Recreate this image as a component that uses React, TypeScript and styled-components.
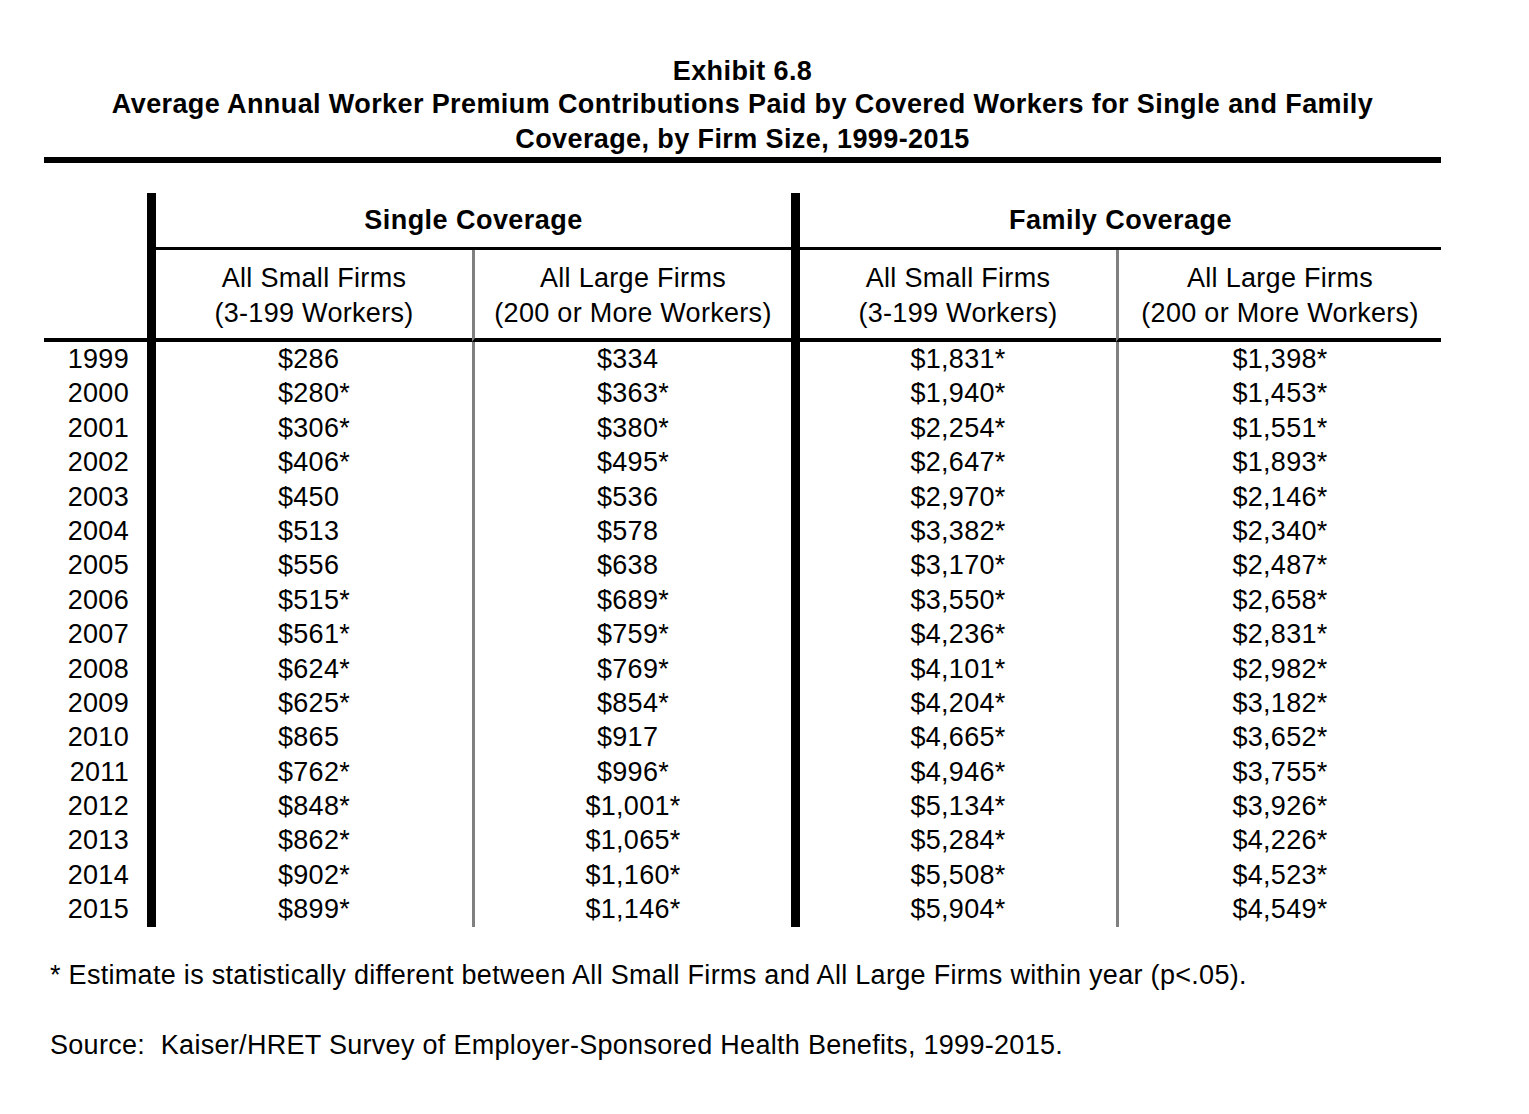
import React from "react";
import styled, { createGlobalStyle } from "styled-components";

const GlobalStyle = createGlobalStyle`
  body {
    margin: 0;
    background: #ffffff;
    color: #000000;
    font-family: "Liberation Sans", Arial, sans-serif;
  }
`;

const Page = styled.div`
  width: 1397px;
  padding: 56px 0 40px 44px;
  letter-spacing: 0.3px;
`;

const ExhibitLine = styled.div`
  font-size: 27px;
  font-weight: bold;
  line-height: 31px;
  letter-spacing: 0.4px;
  text-align: center;
`;

const Subtitle = styled.div`
  font-size: 27px;
  font-weight: bold;
  line-height: 35px;
  letter-spacing: 0.4px;
  text-align: center;
`;

const Rule = styled.div`
  height: 6px;
  background: #000;
  margin-bottom: 30px;
`;

const Grid = styled.div`
  display: grid;
  grid-template-columns: 103px 325px 319px 325px 325px;
  font-size: 27px;
`;

const GroupCell = styled.div<{ $col: string }>`
  grid-column: ${(p) => p.$col};
  box-sizing: border-box;
  height: 57px;
  border-left: 9px solid #000;
  border-bottom: 3px solid #000;
  display: flex;
  align-items: center;
  justify-content: center;
  font-weight: bold;
  letter-spacing: 0.45px;
`;

const Blank = styled.div`
  grid-column: 1;
`;

type Line = "thick" | "thin" | "none";

const lineStyle = (l: Line) =>
  l === "thick" ? "9px solid #000" : l === "thin" ? "3px solid #808080" : "none";

const HeadCell = styled.div<{ $line: Line }>`
  box-sizing: border-box;
  height: 92px;
  padding-top: 11px;
  border-left: ${(p) => lineStyle(p.$line)};
  border-bottom: 4px solid #000;
  line-height: 35px;
  text-align: center;
`;

const YearCell = styled.div`
  height: 34.4px;
  line-height: 34.4px;
  text-align: right;
  padding-right: 18px;
`;

const ValueCell = styled.div<{ $line: Line }>`
  box-sizing: border-box;
  height: 34.4px;
  line-height: 34.4px;
  border-left: ${(p) => lineStyle(p.$line)};
  text-align: center;
`;

const Star = styled.span<{ $show: boolean }>`
  visibility: ${(p) => (p.$show ? "visible" : "hidden")};
`;

const Note = styled.p`
  margin: 31px 0 0 6px;
  font-size: 27px;
  line-height: 35px;
`;

const Source = styled(Note)`
  margin-top: 35px;
`;

const rows: [string, string, string, string, string][] = [
  ["1999", "$286", "$334", "$1,831*", "$1,398*"],
  ["2000", "$280*", "$363*", "$1,940*", "$1,453*"],
  ["2001", "$306*", "$380*", "$2,254*", "$1,551*"],
  ["2002", "$406*", "$495*", "$2,647*", "$1,893*"],
  ["2003", "$450", "$536", "$2,970*", "$2,146*"],
  ["2004", "$513", "$578", "$3,382*", "$2,340*"],
  ["2005", "$556", "$638", "$3,170*", "$2,487*"],
  ["2006", "$515*", "$689*", "$3,550*", "$2,658*"],
  ["2007", "$561*", "$759*", "$4,236*", "$2,831*"],
  ["2008", "$624*", "$769*", "$4,101*", "$2,982*"],
  ["2009", "$625*", "$854*", "$4,204*", "$3,182*"],
  ["2010", "$865", "$917", "$4,665*", "$3,652*"],
  ["2011", "$762*", "$996*", "$4,946*", "$3,755*"],
  ["2012", "$848*", "$1,001*", "$5,134*", "$3,926*"],
  ["2013", "$862*", "$1,065*", "$5,284*", "$4,226*"],
  ["2014", "$902*", "$1,160*", "$5,508*", "$4,523*"],
  ["2015", "$899*", "$1,146*", "$5,904*", "$4,549*"],
];

const lines: Line[] = ["thick", "thin", "thick", "thin"];
const small = ["All Small Firms", "(3-199 Workers)"];
const large = ["All Large Firms", "(200 or More Workers)"];

const Value = ({ v, line }: { v: string; line: Line }) => {
  const sig = v.endsWith("*");
  return (
    <ValueCell $line={line}>
      {sig ? v.slice(0, -1) : v}
      <Star $show={sig}>*</Star>
    </ValueCell>
  );
};

export default function App() {
  return (
    <Page>
      <GlobalStyle />
      <ExhibitLine>Exhibit 6.8</ExhibitLine>
      <Subtitle>
        Average Annual Worker Premium Contributions Paid by Covered Workers for Single and Family
        <br />
        Coverage, by Firm Size, 1999-2015
      </Subtitle>
      <Rule />
      <Grid>
        <Blank />
        <GroupCell $col="2 / 4">Single Coverage</GroupCell>
        <GroupCell $col="4 / 6">Family Coverage</GroupCell>

        <HeadCell $line="none" />
        {[small, large, small, large].map((h, i) => (
          <HeadCell key={i} $line={lines[i]}>
            {h[0]}
            <br />
            {h[1]}
          </HeadCell>
        ))}

        {rows.map((r) => (
          <React.Fragment key={r[0]}>
            <YearCell>{r[0]}</YearCell>
            {r.slice(1).map((v, i) => (
              <Value key={i} v={v} line={lines[i]} />
            ))}
          </React.Fragment>
        ))}
      </Grid>
      <Note>
        * Estimate is statistically different between All Small Firms and All Large Firms within year (p&lt;.05).
      </Note>
      <Source>Source:&nbsp; Kaiser/HRET Survey of Employer-Sponsored Health Benefits, 1999-2015.</Source>
    </Page>
  );
}
